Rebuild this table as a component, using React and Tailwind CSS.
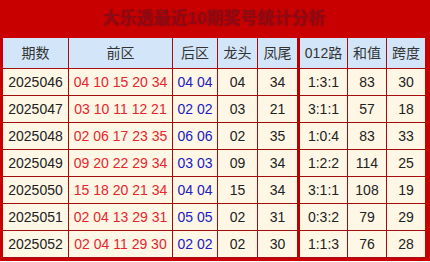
import React from "react";

const rows = [
  ["2025046", "04 10 15 20 34", "04 04", "04", "34", "1:3:1", "83", "30"],
  ["2025047", "03 10 11 12 21", "02 02", "03", "21", "3:1:1", "57", "18"],
  ["2025048", "02 06 17 23 35", "06 06", "02", "35", "1:0:4", "83", "33"],
  ["2025049", "09 20 22 29 34", "03 03", "09", "34", "1:2:2", "114", "25"],
  ["2025050", "15 18 20 21 34", "04 04", "15", "34", "3:1:1", "108", "19"],
  ["2025051", "02 04 13 29 31", "05 05", "02", "31", "0:3:2", "79", "29"],
  ["2025052", "02 04 11 29 30", "02 02", "02", "30", "1:1:3", "76", "28"],
];

const headers = ["期数", "前区", "后区", "龙头", "凤尾", "012路", "和值", "跨度"];

const cellBase = "flex items-center justify-center border-r border-b border-[#a30d0d]";

function cellCls(i) {
  if (i === 4) return cellBase + " border-r-[3px] border-r-[#b80000]";
  if (i === 7) return "flex items-center justify-center border-b border-[#a30d0d]";
  return cellBase;
}

export default function App() {
  return (
    <div
      className="w-[430px] bg-[#c80000] pl-[3px] pr-[5px] pb-[3px]"
      style={{ fontFamily: '"Liberation Sans", "Noto Sans CJK SC", sans-serif' }}
    >
      <div className="h-[38px] flex items-center justify-center text-[17px] font-bold text-[#8c0a14] [text-shadow:0_0_2px_#a00000]">
        大乐透最近10期奖号统计分析
      </div>
      <div className="grid grid-cols-[66px_104px_45px_40px_42px_48px_39px_38px] text-[14px]">
        {headers.map((h, i) => (
          <div key={h} className={cellCls(i) + " h-[31px] bg-[#d3e6f9] text-[#333]"}>
            {h}
          </div>
        ))}
        {rows.map((r) =>
          r.map((v, i) => (
            <div
              key={r[0] + i}
              className={
                cellCls(i) +
                " h-[27px] bg-[#fff7e6] " +
                (i === 1 ? "text-[#e8242c]" : i === 2 ? "text-[#2020c0]" : "text-[#222]")
              }
            >
              {v}
            </div>
          ))
        )}
      </div>
    </div>
  );
}
